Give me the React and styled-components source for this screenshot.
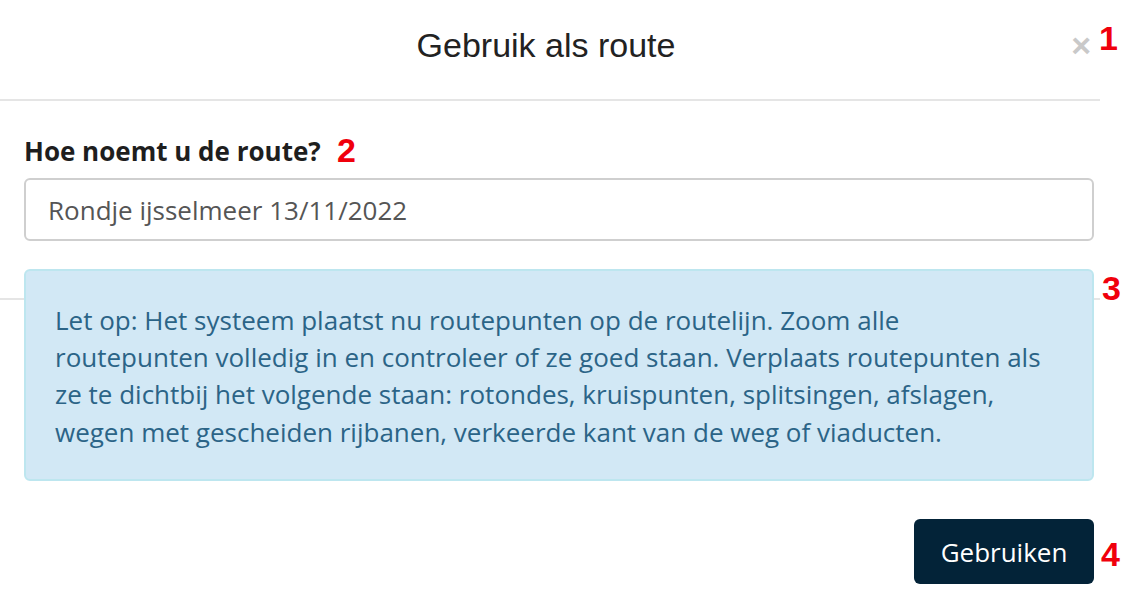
import React from "react";
import styled, { createGlobalStyle } from "styled-components";

const GlobalStyle = createGlobalStyle`
  html, body {
    margin: 0;
    padding: 0;
    background: #fff;
  }
  body {
    font-family: "Open Sans", "Liberation Sans", sans-serif;
  }
`;

const Page = styled.div`
  position: relative;
  width: 1125px;
  height: 599px;
  overflow: hidden;
  background: #fff;
`;

const Modal = styled.div`
  width: 1100px;
`;

const Header = styled.div`
  height: 99px;
  border-bottom: 2px solid #e5e5e5;
  display: grid;
  grid-template-columns: 1fr auto 1fr;
  align-items: center;
`;

const Title = styled.h4`
  grid-column: 2;
  margin: 0 0 0 -8px;
  padding-bottom: 8px;
  font-family: "Liberation Sans", Arial, sans-serif;
  font-weight: 400;
  font-size: 34px;
  color: #222;
`;

const Close = styled.button`
  grid-column: 3;
  justify-self: end;
  margin: 0 9px 10px 0;
  padding: 0;
  border: 0;
  background: none;
  font-family: "Liberation Sans", Arial, sans-serif;
  font-weight: 700;
  font-size: 34px;
  line-height: 1;
  color: #c9c9c9;
`;

const Body = styled.div`
  padding: 32px 6px 0 24px;
  background: linear-gradient(#e5e5e5, #e5e5e5) no-repeat 0 197px / 1100px 2px;
`;

const Label = styled.label`
  display: block;
  margin-bottom: 9px;
  font-weight: 700;
  font-size: 26px;
  line-height: 36px;
  color: #1e1e1e;
`;

const Input = styled.input`
  box-sizing: border-box;
  display: block;
  width: 100%;
  height: 63px;
  padding: 0 22px;
  border: 2px solid #cfcfcf;
  border-radius: 6px;
  font-family: "Open Sans", sans-serif;
  font-size: 26px;
  color: #555;
  outline: none;
`;

const Alert = styled.div`
  box-sizing: border-box;
  margin-top: 28px;
  height: 212px;
  padding: 31px 30px 0 29px;
  background: #d2e8f5;
  border: 2px solid #bde6ef;
  border-radius: 6px;
  color: #2b6487;
  font-size: 26px;
  line-height: 37.2px;
`;

const Footer = styled.div`
  display: flex;
  justify-content: flex-end;
  padding-top: 38px;
`;

const Button = styled.button`
  width: 180px;
  height: 65px;
  border: 0;
  border-radius: 6px;
  background: #032338;
  color: #fff;
  font-family: "Open Sans", sans-serif;
  font-size: 26px;
`;

const Marker = styled.span`
  position: absolute;
  left: ${(p) => p.x}px;
  top: ${(p) => p.y}px;
  font-family: "Liberation Sans", Arial, sans-serif;
  font-weight: 700;
  font-size: 34px;
  line-height: 1;
  color: #f0000c;
`;

export default function App() {
  return (
    <Page>
      <GlobalStyle />
      <Modal>
        <Header>
          <Title>Gebruik als route</Title>
          <Close aria-label="Sluiten">×</Close>
        </Header>
        <Body>
          <Label>Hoe noemt u de route?</Label>
          <Input defaultValue="Rondje ijsselmeer 13/11/2022" />
          <Alert>
            Let op: Het systeem plaatst nu routepunten op de routelijn. Zoom alle
            <br />
            routepunten volledig in en controleer of ze goed staan. Verplaats routepunten als
            <br />
            ze te dichtbij het volgende staan: rotondes, kruispunten, splitsingen, afslagen,
            <br />
            wegen met gescheiden rijbanen, verkeerde kant van de weg of viaducten.
          </Alert>
          <Footer>
            <Button>Gebruiken</Button>
          </Footer>
        </Body>
      </Modal>
      <Marker x={1099} y={21}>1</Marker>
      <Marker x={337} y={133}>2</Marker>
      <Marker x={1102} y={271}>3</Marker>
      <Marker x={1101} y={537}>4</Marker>
    </Page>
  );
}
